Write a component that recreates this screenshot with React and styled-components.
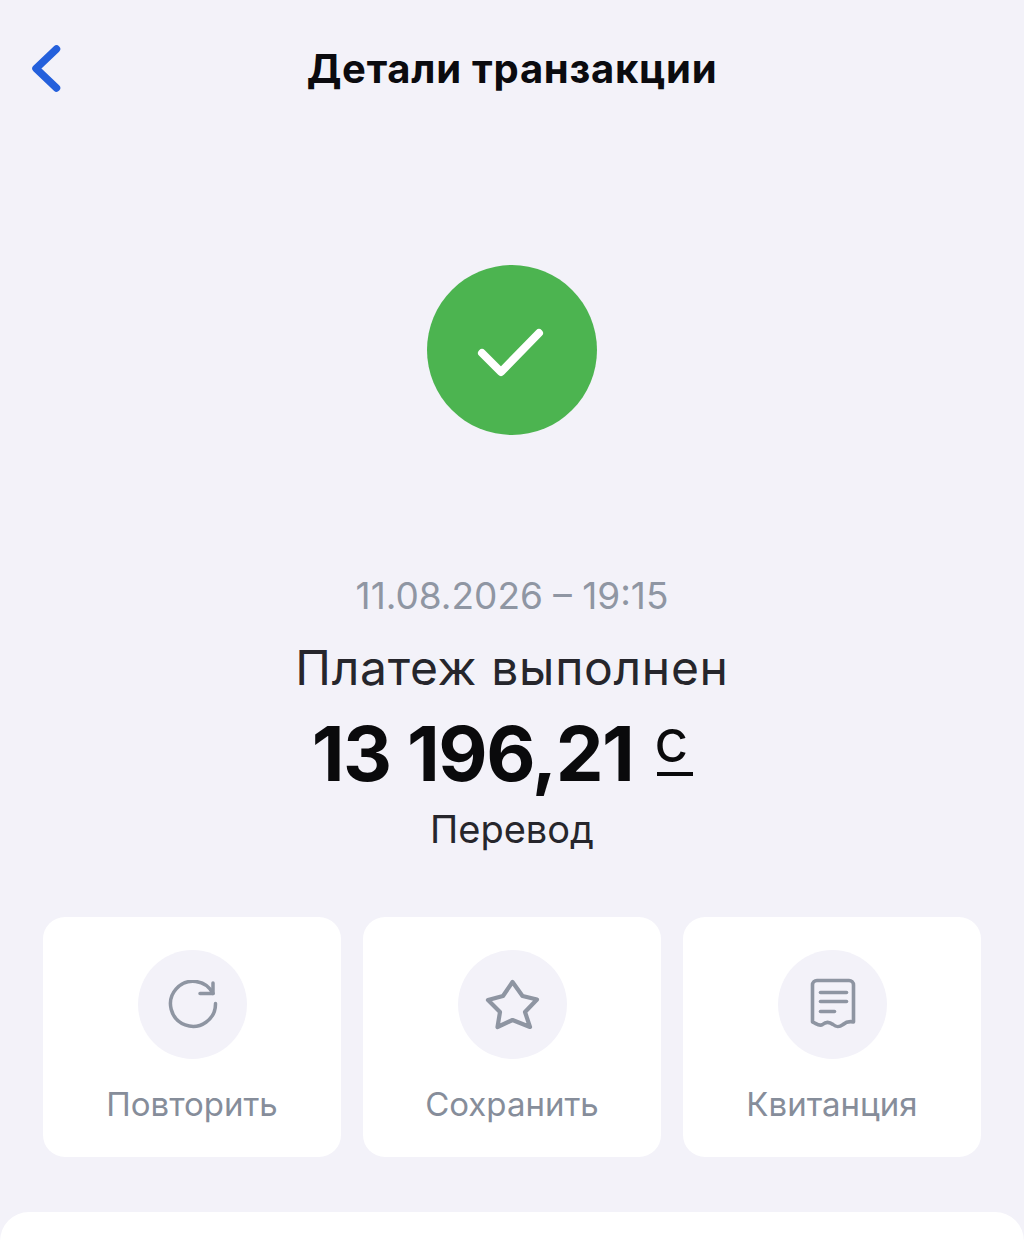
import React from 'react';
import styled, {createGlobalStyle} from 'styled-components';

const GlobalStyle = createGlobalStyle`
    html, body {
        margin:0;
        padding:0;
        background-color:#F3F2F9;
    }
    * {
        box-sizing:border-box;
    }
`;
const Page = styled.div`
    width:1024px;
    height:1241px;
    overflow:hidden;
    background-color:#F3F2F9;
    font-family:Inter, "Noto Sans", sans-serif;
    display:flex;
    flex-direction:column;
`;
const Header = styled.div`
    height:137px;
    padding:0 30px;
    display:grid;
    grid-template-columns:32px 1fr 32px;
    align-items:center;
`;
const BackButton = styled.div`
    display:flex;
    align-items:center;
    height:50px;
`;
const HeaderTitle = styled.div`
    font-size:40px;
    font-weight:700;
    line-height:46px;
    color:#0B0B0F;
    text-align:center;
    letter-spacing:0.75px;
`;
const Status = styled.div`
    display:flex;
    justify-content:center;
    padding-top:128px;
`;
const StatusCircle = styled.div`
    width:170px;
    height:170px;
    border-radius:50%;
    background-color:#4CB450;
    display:flex;
    align-items:center;
    justify-content:center;
`;
const Summary = styled.div`
    display:flex;
    flex-direction:column;
    align-items:center;
    padding-top:138px;
`;
const DateText = styled.div`
    font-size:37px;
    font-weight:400;
    line-height:46px;
    color:#8F96A3;
`;
const StatusText = styled.div`
    font-size:48px;
    font-weight:400;
    line-height:56px;
    color:#26262C;
    margin-top:21px;
    letter-spacing:0.7px;
`;
const AmountRow = styled.div`
    display:flex;
    align-items:flex-start;
    gap:24px;
    margin-top:15px;
    margin-right:19px;
    color:#0A0A0C;
`;
const Amount = styled.div`
    font-size:76px;
    font-weight:650;
    line-height:84px;
    letter-spacing:-1.5px;
`;
const Currency = styled.div`
    width:36px;
    height:56px;
    margin-top:9px;
    font-size:60px;
    font-weight:400;
    line-height:40px;
    text-align:left;
    text-indent:-3px;
    border-bottom:4px solid #0A0A0C;
`;
const TypeText = styled.div`
    font-size:38px;
    font-weight:400;
    line-height:44px;
    color:#26262C;
    margin-top:12px;
`;
const Actions = styled.div`
    display:grid;
    grid-template-columns:repeat(3, 298px);
    gap:22px;
    padding-left:43px;
    margin-top:66px;
`;
const ActionCard = styled.div`
    height:240px;
    background-color:#FFFFFF;
    border-radius:22px;
    display:flex;
    flex-direction:column;
    align-items:center;
    padding-top:33px;
`;
const ActionIcon = styled.div`
    width:109px;
    height:109px;
    border-radius:50%;
    background-color:#F3F2F9;
    display:flex;
    align-items:center;
    justify-content:center;
`;
const ActionLabel = styled.div`
    font-size:33px;
    font-weight:400;
    line-height:40px;
    color:#868D9A;
    margin-top:25px;
`;
const Sheet = styled.div`
    flex:1;
    margin-top:55px;
    background-color:#FFFFFF;
    border-radius:34px 34px 0 0;
`;

const BackIcon = () => <svg width="32" height="50" viewBox="0 0 32 50" fill="none">
    <path d="M26.5 5 L6 24.5 L26.5 44" stroke="#2460DC" strokeWidth="7.5" strokeLinecap="round" strokeLinejoin="round"/>
</svg>

const CheckIcon = () => <svg width="70" height="56" viewBox="0 0 70 56" fill="none">
    <path d="M5 31 L24 50 L62 11" stroke="#FFFFFF" strokeWidth="8" strokeLinecap="round" strokeLinejoin="round"/>
</svg>

const RepeatIcon = () => <svg width="52" height="50" viewBox="-1.5 0 52 50" fill="none" stroke="#8E95A2" strokeWidth="3.5" strokeLinecap="round" strokeLinejoin="round">
    <path d="M48 23.5 A22.5 22.5 0 1 1 45.5 13.5"/>
    <path d="M45.5 3 V13.5 H32.5"/>
</svg>

const StarIcon = () => <svg width="58" height="54" viewBox="0 0 58 54" fill="none" stroke="#8E95A2" strokeWidth="4.2" strokeLinejoin="round">
    <path d="M29.5 4 L39.5 18 L54 21.5 L42 34 L47 49 L29.5 42 L14.5 49 L17 34 L5 22 L20 18 Z"/>
</svg>

const ReceiptIcon = () => <svg width="50" height="54" viewBox="0 0 50 54" fill="none" stroke="#8E95A2" strokeWidth="3.6" strokeLinecap="round" strokeLinejoin="round">
    <path d="M5.5 44 V7 A4.5 4.5 0 0 1 10 2.5 H42 A4.5 4.5 0 0 1 46.5 7 V44 C42 43 39 44 36 46.5 C32 49.5 29.5 49.5 26 46.5 C22 43.5 19 43.5 15.5 46.5 C12 49 9 45 5.5 44 Z"/>
    <path d="M13.5 14.5 H39.5"/>
    <path d="M13.5 23.5 H39.5"/>
    <path d="M13.5 33.5 H27.5"/>
</svg>

const actions = [
    {label:"Повторить", icon:<RepeatIcon />},
    {label:"Сохранить", icon:<StarIcon />},
    {label:"Квитанция", icon:<ReceiptIcon />},
];

const App = () => {
    return <Page>
        <GlobalStyle />
        <Header>
            <BackButton><BackIcon /></BackButton>
            <HeaderTitle>Детали транзакции</HeaderTitle>
        </Header>
        <Status>
            <StatusCircle><CheckIcon /></StatusCircle>
        </Status>
        <Summary>
            <DateText>11.08.2026 – 19:15</DateText>
            <StatusText>Платеж выполнен</StatusText>
            <AmountRow>
                <Amount>13 196,21</Amount>
                <Currency>с</Currency>
            </AmountRow>
            <TypeText>Перевод</TypeText>
        </Summary>
        <Actions>
            {actions.map(a => <ActionCard key={a.label}>
                <ActionIcon>{a.icon}</ActionIcon>
                <ActionLabel>{a.label}</ActionLabel>
            </ActionCard>)}
        </Actions>
        <Sheet />
    </Page>
}

export default App;
